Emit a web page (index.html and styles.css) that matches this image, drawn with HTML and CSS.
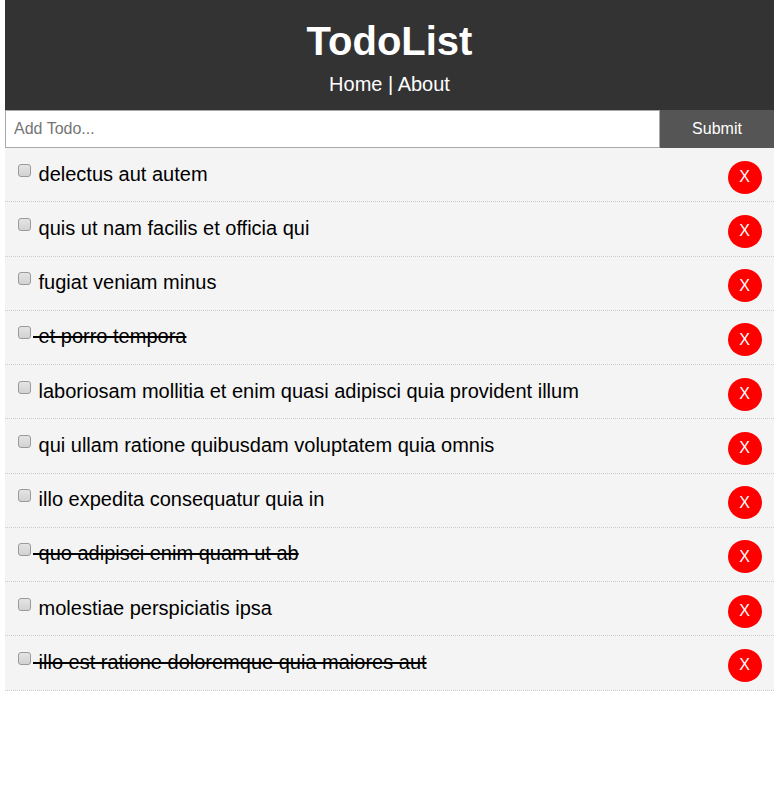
FILE: index.html
```html
<!DOCTYPE html>
<html lang="en">
<head>
<meta charset="utf-8">
<title>TodoList</title>
<link rel="stylesheet" href="styles.css">
</head>
<body>
<div class="app">
  <header class="header">
    <h1 class="title">TodoList</h1>
    <nav class="nav"><a class="nav-link" href="#">Home</a> | <a class="nav-link" href="#">About</a></nav>
  </header>
  <form class="add-form">
    <input class="add-input" type="text" placeholder="Add Todo...">
    <button class="add-btn" type="button">Submit</button>
  </form>
  <div class="todos">
    <div class="todo"><p class="todo-text"><input class="check" type="checkbox"> delectus aut autem</p><button class="del" type="button">X</button></div>
    <div class="todo"><p class="todo-text"><input class="check" type="checkbox"> quis ut nam facilis et officia qui</p><button class="del" type="button">X</button></div>
    <div class="todo"><p class="todo-text"><input class="check" type="checkbox"> fugiat veniam minus</p><button class="del" type="button">X</button></div>
    <div class="todo"><p class="todo-text done"><input class="check" type="checkbox"> et porro tempora</p><button class="del" type="button">X</button></div>
    <div class="todo"><p class="todo-text"><input class="check" type="checkbox"> laboriosam mollitia et enim quasi adipisci quia provident illum</p><button class="del" type="button">X</button></div>
    <div class="todo"><p class="todo-text"><input class="check" type="checkbox"> qui ullam ratione quibusdam voluptatem quia omnis</p><button class="del" type="button">X</button></div>
    <div class="todo"><p class="todo-text"><input class="check" type="checkbox"> illo expedita consequatur quia in</p><button class="del" type="button">X</button></div>
    <div class="todo"><p class="todo-text done"><input class="check" type="checkbox"> quo adipisci enim quam ut ab</p><button class="del" type="button">X</button></div>
    <div class="todo"><p class="todo-text"><input class="check" type="checkbox"> molestiae perspiciatis ipsa</p><button class="del" type="button">X</button></div>
    <div class="todo"><p class="todo-text done"><input class="check" type="checkbox"> illo est ratione doloremque quia maiores aut</p><button class="del" type="button">X</button></div>
  </div>
</div>
</body>
</html>
```

FILE: styles.css
```css
* { box-sizing: border-box; }

body {
  margin: 0;
  font-family: "Liberation Sans", Arial, sans-serif;
  background: #fff;
  color: #000;
}

.app {
  margin: 0 6px 0 5px;
}

.header {
  background: #333;
  color: #fff;
  text-align: center;
  padding: 13px 12.5px;
  height: 110px;
}

.title {
  margin: 0;
  font-size: 40px;
  line-height: 57px;
  font-weight: bold;
}

.nav {
  font-size: 20px;
  line-height: 28px;
}

.nav-link {
  color: #fff;
  text-decoration: none;
}

.add-form {
  display: flex;
  height: 38px;
  margin: 0;
}

.add-input {
  flex: 0 0 655px;
  border: 1px solid #a9a9a9;
  margin: 0;
  padding: 0 8px;
  font-family: "Liberation Sans", Arial, sans-serif;
  font-size: 16px;
  color: #000;
  background: #fff;
  outline: none;
}

.add-input::placeholder {
  color: #757575;
}

.add-btn {
  flex: 1;
  border: none;
  margin: 0;
  background: #555;
  color: #fff;
  font-family: "Liberation Sans", Arial, sans-serif;
  font-size: 16px;
  padding: 0;
}

.todo {
  display: flex;
  align-items: flex-start;
  background: #f4f4f4;
  border-bottom: 1px dotted #ccc;
  padding: 12.5px 12.5px 0 12.5px;
  height: 54.25px;
}

.todo-text {
  flex: 1;
  margin: -1px 0 0;
  font-size: 20px;
  line-height: 28px;
}

.done {
  text-decoration: line-through;
}

.check {
  -webkit-appearance: none;
  appearance: none;
  width: 13px;
  height: 13px;
  margin: 0 2px 0 0.5px;
  vertical-align: 4px;
  border: 1px solid #9a9a9a;
  border-radius: 3px;
  background: linear-gradient(#e4e4e4, #d2d2d2);
}

.del {
  flex: 0 0 34px;
  width: 34px;
  height: 33px;
  border: none;
  border-radius: 50%;
  background: #ff0000;
  color: #fff;
  font-family: "Liberation Sans", Arial, sans-serif;
  font-size: 16px;
  padding: 0;
  margin: 0;
}
```
